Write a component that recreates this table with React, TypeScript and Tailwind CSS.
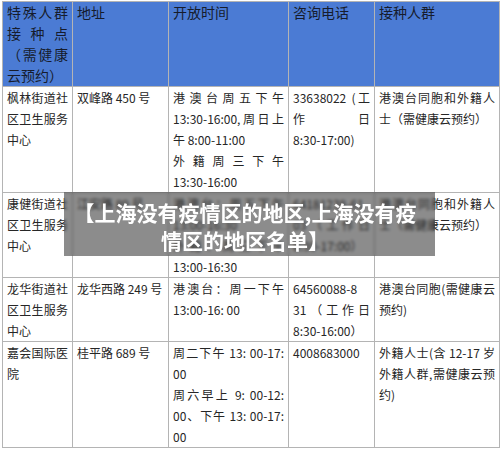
import React from "react";

const td =
  "border border-[#b4b4b4] px-[4px] py-0 align-top text-justify leading-[21px] text-[12px] text-[#262626]";
const th =
  "border border-[#b4b4b4] px-[4px] py-0 align-top text-justify leading-[21px] text-[14px] font-normal text-[#161c2c]";

const N = ({ children }: { children: React.ReactNode }) => (
  <span className="whitespace-nowrap">{children}</span>
);

export default function App() {
  return (
    <div className="relative w-[500px] h-[450px] bg-white overflow-hidden font-['Noto_Sans_CJK_SC','Noto_Sans',sans-serif]">
      <div className="pt-[1px] pl-[2px]">
        <table className="table-fixed border-collapse w-[497px]">
          <colgroup>
            <col className="w-[70px]" />
            <col className="w-[96px]" />
            <col className="w-[120px]" />
            <col className="w-[86px]" />
            <col className="w-[125px]" />
          </colgroup>
          <thead>
            <tr className="bg-[#4b7bd4]">
              <th className={th}>特殊人群接种点（需健康云预约）</th>
              <th className={th}>地址</th>
              <th className={th}>开放时间</th>
              <th className={th}>咨询电话</th>
              <th className={th}>接种人群</th>
            </tr>
          </thead>
          <tbody>
            <tr>
              <td className={td}>枫林街道社区卫生服务中心</td>
              <td className={td}>双峰路 450 号</td>
              <td className={td}>
                港澳台周五下午<N>13:30-16:00,</N>周日上午 <N>8:00-11:00</N>
                <br />
                外籍周三下午<N>13:30-16:00</N>
              </td>
              <td className={td}>
                33638022 (工作日 <N>8:30-17:00)</N>
              </td>
              <td className={td}>港澳台同胞和外籍人士（需健康云预约）</td>
            </tr>
            <tr>
              <td className={td}>康健街道社区卫生服务中心</td>
              <td className={td}>江安路 89 号</td>
              <td className={td}>
                港澳台：周五下午<N>13:00-16:30</N>
                <br />
                外籍：周三下午<N>13:00-16:30</N>
              </td>
              <td className={td}>
                64181238-61
                <wbr />
                03（工作日 <N>8:30-17:00）</N>
              </td>
              <td className={td}>港澳台同胞和外籍人士（需健康云预约）</td>
            </tr>
            <tr>
              <td className={td}>龙华街道社区卫生服务中心</td>
              <td className={td}>龙华西路 249 号</td>
              <td className={td}>港澳台：周一下午<N>13:00-16: 00</N></td>
              <td className={td}>
                64560088-8
                <wbr />
                31（工作日 <N>8:30-16:00）</N>
              </td>
              <td className={td}>港澳台同胞(需健康云预约)</td>
            </tr>
            <tr>
              <td className={td}>嘉会国际医院</td>
              <td className={td}>桂平路 689 号</td>
              <td className={td}>
                周二下午 13: 00-17: 00
                <br />
                周六早上 9: 00-12: 00、下午 13: 00-17: 00
              </td>
              <td className={td}>4008683000</td>
              <td className={td}>外籍人士(含 12-17 岁外籍人群,需健康云预约)</td>
            </tr>
          </tbody>
        </table>
      </div>

      <div className="absolute left-[64px] top-[192px] w-[371px] h-[64px] bg-[rgba(45,45,45,0.55)] backdrop-blur-[1.5px] pt-[6px] pb-[2px] pl-[4px] pr-[13px]">
        <p className="text-center text-white font-bold text-[21px] leading-[28px]">
          【上海没有疫情区的地区,上海没有疫情区的地区名单】
        </p>
      </div>
    </div>
  );
}
